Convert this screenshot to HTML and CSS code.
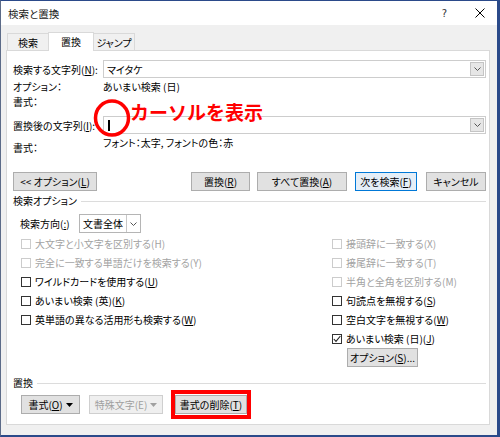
FILE: index.html
```html
<!DOCTYPE html>
<html lang="ja">
<head>
<meta charset="utf-8">
<title>検索と置換</title>
<link rel="stylesheet" href="styles.css">
</head>
<body>
<div class="window">
  <div class="titlebar">
    <span class="title">検索と置換</span>
    <span class="help">?</span>
    <span class="close"><svg width="10" height="10" viewBox="0 0 10 10"><path d="M0.5 0.5L9.5 9.5M9.5 0.5L0.5 9.5" stroke="#000" stroke-width="1" fill="none"/></svg></span>
  </div>
  <div class="body">
    <div class="tabs">
      <div class="tab t1">検索</div>
      <div class="tab t2 active">置換</div>
      <div class="tab t3">ジャンプ</div>
    </div>
    <div class="panel">
      <div class="row combo-row">
        <span class="lbl">検索する文字列(<u>N</u>):</span>
        <div class="combo">
          <span class="combo-text">マイタケ</span>
          <span class="drop"><svg width="7" height="4" viewBox="0 0 7 4"><polyline points="0.5,0.5 3.5,3.5 6.5,0.5" fill="none" stroke="#555" stroke-width="1"/></svg></span>
        </div>
      </div>
      <div class="row info r2"><span class="lbl">オプション：</span><span>あいまい検索 (日)</span></div>
      <div class="row info r3"><span class="lbl">書式：</span></div>
      <div class="row combo-row r4">
        <span class="lbl">置換後の文字列(<u>I</u>):</span>
        <div class="combo">
          <span class="combo-text"><span class="caret"></span></span>
          <span class="drop"><svg width="7" height="4" viewBox="0 0 7 4"><polyline points="0.5,0.5 3.5,3.5 6.5,0.5" fill="none" stroke="#555" stroke-width="1"/></svg></span>
        </div>
      </div>
      <div class="row info r5"><span class="lbl low">書式：</span><span>フォント：太字, フォントの色：赤</span></div>

      <div class="btn-row">
        <button class="btn b-opt">&lt;&lt; オプション(<u>L</u>)</button>
        <div class="btn-group">
          <button class="btn b-rep">置換(<u>R</u>)</button>
          <button class="btn b-all">すべて置換(<u>A</u>)</button>
          <button class="btn b-next default">次を検索(<u>F</u>)</button>
          <button class="btn b-cancel">キャンセル</button>
        </div>
      </div>

      <div class="group-head"><span>検索オプション</span><span class="rule"></span></div>

      <div class="dir-row">
        <span class="dir-lbl">検索方向(<u>:</u>)</span>
        <div class="select">
          <span class="sel-text">文書全体</span>
          <span class="sel-drop"><svg width="7" height="4" viewBox="0 0 7 4"><polyline points="0.5,0.5 3.5,3.5 6.5,0.5" fill="none" stroke="#555" stroke-width="1"/></svg></span>
        </div>
      </div>

      <div class="opts">
        <div class="col col-left">
          <div class="opt disabled"><span class="cb"></span>大文字と小文字を区別する(H)</div>
          <div class="opt disabled"><span class="cb"></span>完全に一致する単語だけを検索する(Y)</div>
          <div class="opt"><span class="cb"></span>ワイルドカードを使用する(<u>U</u>)</div>
          <div class="opt"><span class="cb"></span>あいまい検索 (英)(<u>K</u>)</div>
          <div class="opt"><span class="cb"></span>英単語の異なる活用形も検索する(<u>W</u>)</div>
        </div>
        <div class="col col-right">
          <div class="opt disabled"><span class="cb"></span>接頭辞に一致する(X)</div>
          <div class="opt disabled"><span class="cb"></span>接尾辞に一致する(T)</div>
          <div class="opt disabled"><span class="cb"></span>半角と全角を区別する(M)</div>
          <div class="opt"><span class="cb"></span>句読点を無視する(<u>S</u>)</div>
          <div class="opt"><span class="cb"></span>空白文字を無視する(<u>W</u>)</div>
          <div class="opt"><span class="cb checked"><svg width="8" height="8" viewBox="0 0 8 8"><polyline points="0.8,4 3,6.4 7.4,1" fill="none" stroke="#222" stroke-width="1.1"/></svg></span>あいまい検索 (日)(<u>J</u>)</div>
          <button class="btn b-options">オプション(<u>S</u>)...</button>
        </div>
      </div>

      <div class="group-head g2"><span>置換</span><span class="rule"></span></div>

      <div class="bottom-row">
        <button class="btn b-fmt">書式(<u>O</u>)<svg class="tri" width="7" height="4" viewBox="0 0 7 4"><polygon points="0,0 7,0 3.5,4" fill="#000"/></svg></button>
        <button class="btn b-special disabled">特殊文字(E)<svg class="tri" width="7" height="4" viewBox="0 0 7 4"><polygon points="0,0 7,0 3.5,4" fill="#a0a0a0"/></svg></button>
        <div class="highlight"><button class="btn b-clear">書式の削除(<u>T</u>)</button></div>
      </div>
    </div>
  </div>
  <div class="annot-circle"><svg width="38" height="38" viewBox="0 0 38 38"><ellipse cx="19" cy="19" rx="16.5" ry="17" fill="none" stroke="#ff0000" stroke-width="3.5"/></svg></div>
  <div class="annot-text">カーソルを表示</div>
</div>
</body>
</html>
```

FILE: styles.css
```css
html, body {
  margin: 0;
  padding: 0;
  background: #ffffff;
}

.window {
  position: relative;
  width: 500px;
  height: 437px;
  box-sizing: border-box;
  border-top: 1px solid #2b4a8a;
  border-right: 3px solid #2b4a8a;
  border-bottom: 2px solid #2b4a8a;
  border-left: 1px solid #5c6b88;
  background: #f0f0f0;
  display: flex;
  flex-direction: column;
  font-family: "Noto Sans CJK JP", "Noto Sans", sans-serif;
  font-size: 10px;
  font-feature-settings: "palt";
  color: #000;
}

u {
  text-decoration: underline;
  text-underline-offset: 1px;
}

/* Title bar */
.titlebar {
  height: 24px;
  flex: none;
  background: #ffffff;
  display: flex;
  align-items: center;
  padding-left: 7px;
  padding-right: 12px;
}
.title {
  font-size: 10.5px;
  color: #1a1a1a;
}
.help {
  margin-left: auto;
  margin-right: 28px;
  font-family: "DejaVu Sans", sans-serif;
  font-size: 10px;
  color: #333;
}
.close {
  display: flex;
}

/* Body */
.body {
  flex: 1;
  padding: 7px 0 0 5px;
}

.tabs {
  display: flex;
  align-items: flex-end;
  height: 18px;
  margin-left: 1px;
}
.tab {
  height: 17px;
  box-sizing: border-box;
  border: 1px solid #d9d9d9;
  border-bottom: none;
  display: flex;
  align-items: center;
  justify-content: center;
  background: #f0f0f0;
}
.tab + .tab {
  margin-left: -1px;
}
.t1 { width: 42px; }
.t2 { width: 46px; }
.t3 { width: 42px; }
.tab.active {
  height: 19px;
  margin-bottom: -1px;
  background: #ffffff;
  position: relative;
  z-index: 1;
  padding-bottom: 2px;
}

.panel {
  width: 484px;
  height: 375px;
  box-sizing: border-box;
  border: 1px solid #d9d9d9;
  background: #ffffff;
  padding: 9px 3px 0 6px;
  display: flex;
  flex-direction: column;
}

.row {
  display: flex;
  align-items: center;
}
.lbl {
  width: 90px;
  flex: none;
}
.combo-row {
  height: 18px;
}
.combo {
  flex: 1;
  height: 18px;
  box-sizing: border-box;
  border: 1px solid #cdcdcd;
  display: flex;
  align-items: center;
  padding: 0 1px 0 3px;
}
.combo-text {
  flex: 1;
  display: flex;
  align-items: center;
}
.drop {
  width: 14px;
  height: 14px;
  box-sizing: border-box;
  border: 1px solid #c4c4c4;
  background: #e6e6e6;
  display: flex;
  align-items: center;
  justify-content: center;
}
.caret {
  display: inline-block;
  width: 2px;
  height: 11px;
  background: #000;
  margin-left: 1px;
}

.info {
  line-height: 12px;
}
.r2 { margin-top: 3px; }
.r3 { margin-top: 3px; }
.r4 { margin-top: 8px; }
.r5 {
  margin-top: 3px;
  align-items: flex-start;
}
.low {
  padding-top: 5px;
}

/* Buttons */
.btn {
  height: 19px;
  box-sizing: border-box;
  border: 1px solid #adadad;
  background: #e1e1e1;
  display: flex;
  align-items: center;
  justify-content: center;
  padding: 0;
  margin: 0;
  font: inherit;
  color: #000;
}
.btn.default {
  border-color: #0078d7;
  background: #e5eef7;
}
.btn.disabled {
  color: #a0a0a0;
  border-color: #cfcfcf;
  background: #efefef;
}
.tri {
  margin-left: 3px;
}

.btn-row {
  display: flex;
  margin-top: 18px;
}
.b-opt { width: 84px; }
.btn-group {
  margin-left: auto;
  display: flex;
}
.b-rep { width: 59px; }
.b-all { width: 90px; margin-left: 7px; }
.b-next { width: 62px; margin-left: 8px; }
.b-cancel { width: 60px; margin-left: 9px; }

.group-head {
  display: flex;
  align-items: center;
  line-height: 12px;
  margin-top: 4px;
}
.rule {
  flex: 1;
  height: 0;
  border-top: 1px solid #dcdcdc;
  margin-left: 4px;
}

.dir-row {
  display: flex;
  align-items: center;
  margin-top: 7px;
  padding-left: 7px;
}
.dir-lbl {
  width: 59px;
}
.select {
  width: 62px;
  height: 19px;
  box-sizing: border-box;
  border: 1px solid #b5b5b5;
  display: flex;
}
.sel-text {
  flex: 1;
  display: flex;
  align-items: center;
  padding-left: 3px;
}
.sel-drop {
  width: 13px;
  border-left: 1px solid #c8c8c8;
  display: flex;
  align-items: center;
  justify-content: center;
}

.opts {
  display: flex;
  align-items: flex-start;
  margin-top: 1px;
  padding-left: 8px;
}
.col-left {
  width: 311px;
}
.col {
  display: flex;
  flex-direction: column;
}
.opt {
  height: 19px;
  display: flex;
  align-items: center;
  white-space: nowrap;
}
.cb {
  width: 10px;
  height: 10px;
  box-sizing: border-box;
  border: 1px solid #333333;
  background: #ffffff;
  margin-right: 4px;
  flex: none;
  display: flex;
  align-items: center;
  justify-content: center;
}
.opt.disabled {
  color: #a3a3a3;
}
.opt.disabled .cb {
  border-color: #cccccc;
}
.b-options {
  width: 71px;
  margin-left: 15px;
}

.g2 {
  margin-top: 10px;
}

.bottom-row {
  display: flex;
  align-items: center;
  margin-top: 1px;
  padding-left: 8px;
}
.b-fmt { width: 59px; }
.b-special { width: 74px; margin-left: 9px; }
.highlight {
  margin-left: 8px;
  border: 4px solid #ff0000;
  padding: 1px 0;
}
.b-clear { width: 72px; }

/* Annotation overlays */
.annot-circle {
  position: absolute;
  left: 92px;
  top: 98px;
  width: 38px;
  height: 38px;
}
.annot-text {
  position: absolute;
  left: 129px;
  top: 101px;
  font-size: 19px;
  line-height: 20px;
  font-weight: bold;
  color: #ff0000;
  font-feature-settings: normal;
  white-space: nowrap;
}
```
